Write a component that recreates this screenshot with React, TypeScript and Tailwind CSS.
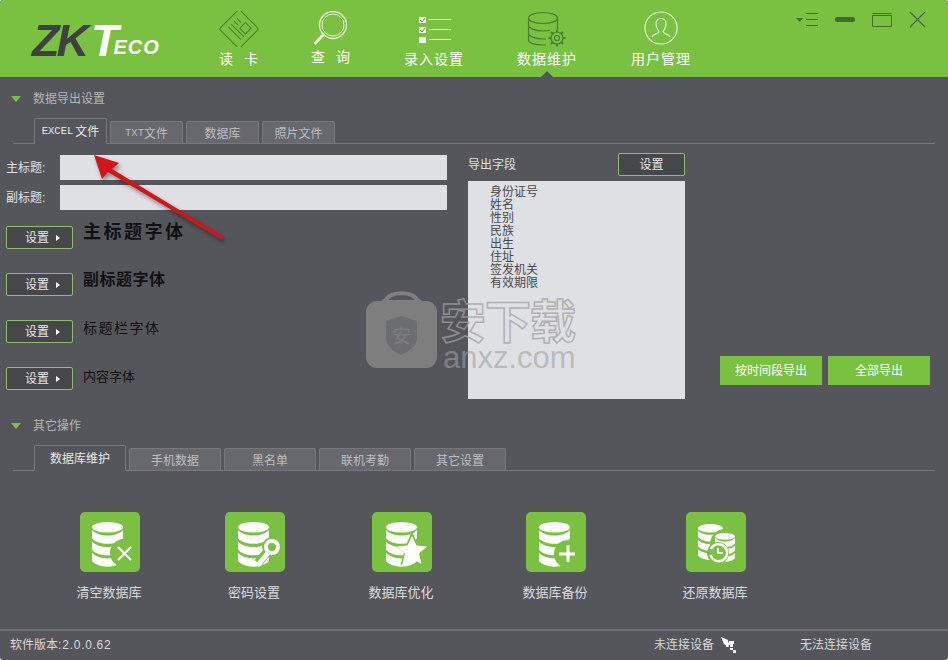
import type { ReactNode } from 'react';

const CJK = "font-['Liberation_Sans','Noto_Sans_CJK_SC',sans-serif]";

const DB_LIST = ['身份证号', '姓名', '性别', '民族', '出生', '住址', '签发机关', '有效期限'];

function DbBody({ x = 12, y = 10, w = 31 }: { x?: number; y?: number; w?: number }) {
  const rx = w / 2;
  const cx = x + rx;
  const ry = w * 0.17;
  const band = w * 0.37;
  const bandPath = (top: number) =>
    `M${x} ${top} c${w * 0.2} ${ry * 1.4} ${w * 0.8} ${ry * 1.4} ${w} 0 v${band * 0.72} c${-w * 0.2} ${ry * 1.4} ${-w * 0.8} ${ry * 1.4} ${-w} 0 z`;
  return (
    <g fill="#fff">
      <ellipse cx={cx} cy={y + ry} rx={rx} ry={ry} />
      <path d={bandPath(y + ry * 1.5)} />
      <path d={bandPath(y + ry * 1.5 + band)} />
      <path d={bandPath(y + ry * 1.5 + band * 2)} />
    </g>
  );
}

const TILES: { label: string; ml: string; icon: ReactNode }[] = [
  {
    label: '清空数据库',
    ml: 'ml-[60px]',
    icon: (
      <>
        <DbBody />
        <circle cx="44" cy="41" r="14" fill="#7ac142" />
        <path d="M38 35l13 13M51 35L38 48" stroke="#fff" strokeWidth="2" />
      </>
    ),
  },
  {
    label: '密码设置',
    ml: 'ml-[45px]',
    icon: (
      <>
        <DbBody x={13} />
        <path d="M33 51l12-14" stroke="#7ac142" strokeWidth="9" />
        <circle cx="47" cy="35" r="10" fill="#7ac142" />
        <circle cx="47" cy="35" r="6" fill="none" stroke="#fff" strokeWidth="4" />
        <path d="M34 52l9-11" stroke="#fff" strokeWidth="5" strokeLinecap="round" />
      </>
    ),
  },
  {
    label: '数据库优化',
    ml: 'ml-[47px]',
    icon: (
      <>
        <DbBody x={14} />
        <path d="M40 19l6 14 14 1-11 9 4 14-13-8-13 8 4-14-11-9 14-1z" fill="#7ac142" transform="translate(4 2) scale(0.9)" />
        <path d="M40 24l4.500 9.500 10.500 1-8 7 2.500 10.500-9.500-5.500-9.500 5.500 2.500-10.500-8-7 10.500-1z" fill="#fff" />
      </>
    ),
  },
  {
    label: '数据库备份',
    ml: 'ml-[54px]',
    icon: (
      <>
        <DbBody x={13} />
        <circle cx="42" cy="42" r="14" fill="#7ac142" />
        <path d="M42 33v17M33 42h16" stroke="#fff" strokeWidth="3" />
      </>
    ),
  },
  {
    label: '还原数据库',
    ml: 'ml-[60px]',
    icon: (
      <>
        <DbBody x={12} y={12} w={25} />
        <circle cx="39" cy="32" r="15" fill="#7ac142" />
        <DbBody x={29} y={21} w={20} />
        <circle cx="32" cy="41" r="11" fill="#7ac142" />
        <path d="M25 37a8.500 8.500 0 1 1-.5 6" fill="none" stroke="#fff" strokeWidth="2.500" />
        <path d="M32 36v5h5" fill="none" stroke="#fff" strokeWidth="2" />
      </>
    ),
  },
];

function CardIcon() {
  return (
    <svg width="44" height="36" viewBox="0 0 44 36" fill="none" stroke="#4b7d2e" strokeWidth="1">
      <rect x="8" y="4" width="28" height="28" rx="2" transform="rotate(45 22 18)" />
      <g transform="rotate(45 22 18)">
        <rect x="22" y="9" width="8" height="8" />
        <path d="M13 12h6M13 16h6M13 20h18M13 24h18" />
      </g>
    </svg>
  );
}

function SearchIcon() {
  return (
    <svg width="44" height="36" viewBox="0 0 44 36" fill="none" stroke="#e6f3d8">
      <circle cx="24" cy="14" r="13.500" strokeWidth="1.300" />
      <circle cx="24" cy="14" r="11" strokeWidth="1" />
      <path d="M14.500 23.500L6.500 32" strokeWidth="3" strokeLinecap="round" />
    </svg>
  );
}

function ChecklistIcon() {
  return (
    <svg width="44" height="36" viewBox="0 0 44 36" fill="none">
      <path d="M17 8.500h22M17 18.500h22M17 28.500h22" stroke="#f0f7e8" strokeWidth="1" />
      <rect x="7" y="6" width="7" height="6" fill="#fff" />
      <rect x="7" y="16" width="7" height="6" fill="#fff" />
      <rect x="7" y="26" width="7" height="6" fill="#fff" />
      <path d="M8 9l2 2 3-4M8 19l2 2 3-4" stroke="#4b7d2e" strokeWidth="1" />
    </svg>
  );
}

function DbGearIcon() {
  return (
    <svg width="44" height="36" viewBox="0 0 44 36" fill="none" stroke="#4b7d2e" strokeWidth="1.200">
      <ellipse cx="18" cy="7" rx="14.500" ry="5.500" />
      <path d="M3.500 7v22c0 3 6 5 14.500 5 1 0 2 0 3 0M3.500 14c0 3 6 6 14.500 6 3 0 5 0 7-1M3.500 22c0 3 6 6 14.500 6 1 0 2 0 3 0M32.500 7v11" />
      <circle cx="32" cy="27" r="2.500" />
      <circle cx="32" cy="27" r="6" />
      <path d="M32 18.500v2.500M32 33v2.500M23.500 27H26M38 27h2.500M26 21l1.800 1.800M36.200 31.200L38 33M38 21l-1.800 1.800M27.800 31.200L26 33" strokeWidth="2" />
    </svg>
  );
}

function UserIcon() {
  return (
    <svg width="44" height="36" viewBox="0 0 44 36" fill="none" stroke="#e6f3d8" strokeWidth="1.200">
      <circle cx="22" cy="17" r="16" />
      <path d="M13 26c1-3 6-3 7-5 0-1.500-3-3-3-8 0-3.500 2-5.500 5-5.500s5 2 5 5.500c0 5-3 6.500-3 8 1 2 6 2 7 5" />
    </svg>
  );
}

const NAV: { label: string; icon: ReactNode; ml: string; active?: boolean; lift?: boolean }[] = [
  { label: '读  卡', icon: <CardIcon />, ml: 'ml-0' },
  { label: '查  询', icon: <SearchIcon />, ml: 'ml-[12px]', lift: true },
  { label: '录入设置', icon: <ChecklistIcon />, ml: 'ml-[23px]' },
  { label: '数据维护', icon: <DbGearIcon />, ml: 'ml-[33px]', active: true },
  { label: '用户管理', icon: <UserIcon />, ml: 'ml-[34px]' },
];

function SectionTitle({ children }: { children: ReactNode }) {
  return (
    <div className="flex h-[41px] items-center pl-[11px] pt-[2px]">
      <div className="h-0 w-0 border-x-[5px] border-t-[6px] border-x-transparent border-t-[#7ac142]" />
      <span className="ml-[12px] text-[12px] text-[#b4b5b8]">{children}</span>
    </div>
  );
}

function Tabs({ items, tabW }: { items: { label: ReactNode }[]; tabW: string }) {
  return (
    <div className="mx-[13px] flex h-[26px] items-end gap-[3px] border-b border-[#77787c] pl-[21px]">
      {items.map((t, i) =>
        i === 0 ? (
          <div
            key={i}
            className={`${tabW} -mb-px flex h-[26px] items-center justify-center rounded-t-[2px] border border-b-0 border-[#77787c] bg-[#55565b] text-[12px] text-[#e8e8ea]`}
          >
            {t.label}
          </div>
        ) : (
          <div
            key={i}
            className={`${tabW} flex h-[22px] items-center justify-center rounded-t-[2px] border border-b-0 border-[#77787c] bg-[#67686d] pt-[2px] text-[12px] text-[#bdbec1]`}
          >
            {t.label}
          </div>
        ),
      )}
    </div>
  );
}

function FontRow({ textClass, children }: { textClass: string; children: ReactNode }) {
  return (
    <div className="mt-[24px] flex h-[23px] items-center first:mt-0">
      <button className="flex h-[23px] w-[67px] items-center rounded-[2px] border border-[#8fbd6e] bg-[#46474b] pl-[18px] text-[12px] text-[#e8e8ea]">
        设置
        <span className="ml-[7px] h-0 w-0 border-y-[3px] border-l-[4px] border-y-transparent border-l-white" />
      </button>
      <span className={`ml-[10px] text-[#101012] ${textClass}`}>{children}</span>
    </div>
  );
}

export default function App() {
  return (
    <div className={`${CJK} relative h-[660px] w-[948px] overflow-hidden rounded-[3px] bg-[#55565b]`}>
      {/* 顶部导航 */}
      <header className="flex h-[77px] bg-[#7ac142]">
        <div className="flex w-[199px] items-start pl-[32px] pt-[19px] font-['Liberation_Sans',sans-serif] font-bold italic">
          <span className="text-[45px] leading-[44px] tracking-[-3px] text-[#3f4043]">ZK</span>
          <span className="ml-[5px] text-[45px] leading-[44px] text-white">T</span>
          <span className="-ml-[5px] mt-[17px] text-[20px] leading-[22px] tracking-[1px] text-white">ECO</span>
        </div>
        {NAV.map((n) => (
          <div key={n.label} className={`${n.ml} relative flex h-[77px] w-[80px] flex-col items-center pt-[11px]`}>
            <div className="h-[36px]">{n.icon}</div>
            <span className={`${n.lift ? 'mt-0' : 'mt-[2px]'} flex h-[20px] items-center whitespace-pre text-[14px] tracking-[1px] text-white`}>
              {n.label}
            </span>
            {n.active && (
              <div className="absolute bottom-0 h-0 w-0 border-x-[6px] border-b-[6px] border-x-transparent border-b-[#55565b]" />
            )}
          </div>
        ))}
        <div className="ml-[94px] flex items-start pt-[12px]">
          <svg width="24" height="15" viewBox="0 0 24 15" fill="none" stroke="#446b2d">
            <path d="M1 6h7l-3.500 4z" fill="#446b2d" stroke="none" />
            <path d="M11 1.500h12M11 7.500h12M11 13.500h12" />
          </svg>
          <div className="ml-[16px] mt-[5px] h-[5px] w-[20px] rounded-[2px] bg-[#446b2d]" />
          <svg className="ml-[17px]" width="20" height="15" viewBox="0 0 20 15" fill="none" stroke="#446b2d">
            <path d="M.5 1.500h19M.5 3.500h19v11H.5z" />
          </svg>
          <svg className="ml-[17px]" width="17" height="16" viewBox="0 0 17 16" fill="none" stroke="#446b2d" strokeWidth="1.200">
            <path d="M1 0l15 15M16 0L1 15" />
          </svg>
        </div>
      </header>

      {/* 数据导出设置 */}
      <SectionTitle>数据导出设置</SectionTitle>
      <Tabs
        tabW="w-[73px]"
        items={[
          {
            label: (
              <>
                <span className="font-['Liberation_Mono',monospace] text-[10.500px]">EXCEL</span>
                <span className="ml-[2px]">文件</span>
              </>
            ),
          },
          {
            label: (
              <>
                <span className="font-['Liberation_Mono',monospace] text-[10.500px]">TXT</span>
                <span>文件</span>
              </>
            ),
          },
          { label: '数据库' },
          { label: '照片文件' },
        ]}
      />
      <div className="flex h-[260px] pl-[6px] pt-[11px]">
        <div className="w-[441px]">
          <div className="flex h-[25px] items-center">
            <span className="w-[54px] text-[12px] text-[#e0e0e2]">主标题:</span>
            <div className="h-[25px] flex-1 bg-[#dfe0e4]" />
          </div>
          <div className="mt-[5px] flex h-[25px] items-center">
            <span className="w-[54px] text-[12px] text-[#e0e0e2]">副标题:</span>
            <div className="h-[25px] flex-1 bg-[#dfe0e4]" />
          </div>
          <div className="mt-[16px]">
            <FontRow textClass="-mt-[10px] text-[18px] font-bold tracking-[2.500px]">主标题字体</FontRow>
            <FontRow textClass="-mt-[10px] text-[16px] font-bold tracking-[.5px]">副标题字体</FontRow>
            <FontRow textClass="-mt-[6px] text-[14px] tracking-[1.500px]">标题栏字体</FontRow>
            <FontRow textClass="-mt-[4px] text-[13px]">内容字体</FontRow>
          </div>
        </div>
        <div className="ml-[21px] -mt-[2px] w-[217px]">
          <div className="flex h-[23px] items-center justify-between">
            <span className="mt-[1px] text-[12px] text-[#e0e0e2]">导出字段</span>
            <button className="h-[23px] w-[67px] rounded-[2px] border border-[#8fbd6e] bg-[#46474b] text-[12px] text-[#e8e8ea]">
              设置
            </button>
          </div>
          <div className="mt-[5px] h-[218px] bg-[#dfe0e4] pl-[22px] pt-[5px] text-[12px] leading-[13px] text-[#48494d]">
            {DB_LIST.map((f) => (
              <div key={f}>{f}</div>
            ))}
          </div>
        </div>
        <div className="ml-[35px] mt-[201px] flex h-[29px] gap-[6px]">
          <button className="w-[102px] bg-[#7ac142] text-[12px] text-white">按时间段导出</button>
          <button className="w-[102px] bg-[#7ac142] text-[12px] text-white">全部导出</button>
        </div>
      </div>

      {/* 其它操作 */}
      <SectionTitle>其它操作</SectionTitle>
      <Tabs
        tabW="w-[92px]"
        items={[
          { label: '数据库维护' },
          { label: '手机数据' },
          { label: '黑名单' },
          { label: '联机考勤' },
          { label: '其它设置' },
        ]}
      />
      <div className="flex h-[158px] pt-[41px]">
        {TILES.map((t) => (
          <div key={t.label} className={`${t.ml} flex w-[100px] flex-col items-center`}>
            <svg className="rounded-[5px] bg-[#7ac142]" width="60" height="60" viewBox="0 0 60 60">
              {t.icon}
            </svg>
            <span className="mt-[12px] mr-[2px] text-[13px] leading-[18px] text-[#dcdde0]">{t.label}</span>
          </div>
        ))}
      </div>

      {/* 状态栏 */}
      <footer className="flex h-[31px] items-center border-t-2 border-[#6f7074] pb-[1px] pl-[10px] text-[12px] text-[#d8d9dc]">
        <span className="flex w-[644px]">
          软件版本:
          <span className="ml-[1px] tracking-[.7px]">2.0.0.62</span>
        </span>
        <span>未连接设备</span>
        <svg className="ml-[7px]" width="16" height="16" viewBox="0 0 16 16" fill="#fff">
          <path d="M0 0l7 3 1 7-5-3z" />
          <path d="M8 4h5v3h-1v3H9V8H7V6h1zM9 11h3v2H9zM12 13h3v3h-3zM5 8h2v2H5z" />
        </svg>
        <span className="ml-[63px]">无法连接设备</span>
      </footer>

      {/* 水印 */}
      <div className="pointer-events-none absolute left-[366px] top-[288px] flex h-[82px] w-[215px]">
        <svg width="71" height="80" viewBox="0 0 71 80">
          <path d="M20 12C24 3 47 3 51 12l3 2H17z" fill="none" stroke="#808081" strokeWidth="4" />
          <rect x="0" y="13" width="71" height="67" rx="11" fill="#7e7e7f" />
          <path d="M20 33l15-5 16 5v18c0 7-9 13-16 16-7-3-15-9-15-16z" fill="#6c6d6f" />
          <text x="35.500" y="55" fontSize="19" fill="#7e7e7f" textAnchor="middle">安</text>
        </svg>
        <div className="ml-[3px] flex flex-col pt-[11px]">
          <span className="h-[47px] text-[46px] font-bold leading-[47px] tracking-[-1px] text-transparent [-webkit-text-stroke:1.500px_rgba(160,160,160,.75)]">
            安下载
          </span>
          <span className="ml-[3px] font-['Liberation_Sans',sans-serif] text-[31px] leading-[24px] text-[#a0a0a0]/60">
            anxz.com
          </span>
        </div>
      </div>

      {/* 红色箭头 */}
      <svg className="pointer-events-none absolute left-[85px] top-[148px] drop-shadow-[2px_3px_2px_rgba(0,0,0,.4)]" width="150" height="100" viewBox="85 148 150 100">
        <path d="M94 155l25 8-7 6 112 68-2 3-114-68-6 7z" fill="#d2141b" />
      </svg>
    </div>
  );
}
